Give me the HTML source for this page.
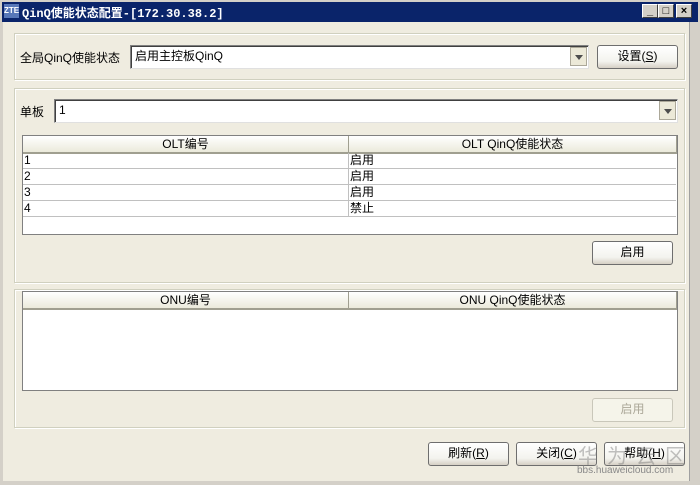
<!DOCTYPE html>
<html><head><meta charset="utf-8"><style>
*{box-sizing:border-box;margin:0;padding:0}
body{width:700px;height:485px;overflow:hidden;background:#d4d0c8;font-family:"Liberation Sans","Noto Sans CJK SC",sans-serif;font-size:12px;color:#000;position:relative}
.a{position:absolute}
.win{left:3px;top:22px;width:686px;height:460px;background:#efece0}
.title{left:0;top:0;width:700px;height:22px;background:#0a246a;border:2px solid #d4d0c8;border-bottom:none}
.ttext{left:22px;top:4px;color:#fff;font-weight:bold;font-size:12px;font-family:"Liberation Mono","Noto Sans CJK SC",monospace}
.tb{top:4px;width:16px;height:14px;background:#d4d0c8;border:1px solid;border-color:#fff #404040 #404040 #fff;font-size:11px;font-weight:bold;text-align:center;line-height:12px}
.grp{border:1px solid #d0d0bf;box-shadow:inset 1px 1px 0 #fff,1px 1px 0 #fff}
.combo{background:#fff;border:1px solid;border-color:#808080 #e0e0e0 #e0e0e0 #808080;box-shadow:inset 1px 1px 0 #404040;padding-left:4px;line-height:21px}
.dd{position:absolute;right:1px;top:1px;width:17px;height:19px;background:#ece9d8;border:1px solid #aca899}
.dd:after{content:"";position:absolute;left:4px;top:7px;border:4px solid transparent;border-top:5px solid #4d4d4d;border-bottom:none}
.btn{border:1px solid #6e6e6e;border-radius:3px;background:linear-gradient(#fff,#f3f3ee 70%,#d6d0c5);text-align:center;line-height:21px}
.tbl{background:#fff;border:1px solid #808080}
.hd{top:0;height:18px;background:linear-gradient(#fff,#ebeadb);border-bottom:2px solid #a09f90;text-align:center;line-height:17px;border-right:1px solid #a09f90}
.row{height:16px;border-bottom:1px solid #c0c0c0;line-height:15px;position:absolute;left:0;width:653px}
.row span{position:absolute;left:1px}
.row span+span{left:325px;border-left:1px solid #c0c0c0;padding-left:1px;height:15px}
</style></head><body>
<div class="a title"></div>
<div class="a" style="left:4px;top:4px;width:15px;height:14px;background:#5878b8;color:#fff;font-size:8px;font-weight:bold;line-height:14px;text-align:center">ZTE</div>
<div class="a ttext">QinQ使能状态配置-[172.30.38.2]</div>
<div class="a tb" style="left:642px">_</div>
<div class="a tb" style="left:658px">□</div>
<div class="a tb" style="left:676px">×</div>
<div class="a win"></div>
<div class="a" style="left:689px;top:22px;width:11px;height:463px;background:#d4d0c8;border-left:1px solid #a0a0a0"></div>
<div class="a" style="left:0;top:481px;width:700px;height:4px;background:#d4d0c8"></div>

<div class="a grp" style="left:14px;top:33px;width:671px;height:47px"></div>
<div class="a" style="left:20px;top:49px">全局QinQ使能状态</div>
<div class="a combo" style="left:130px;top:45px;width:459px;height:24px">启用主控板QinQ<div class="dd"></div></div>
<div class="a btn" style="left:597px;top:45px;width:81px;height:24px">设置(<u>S</u>)</div>

<div class="a grp" style="left:14px;top:88px;width:671px;height:195px"></div>
<div class="a" style="left:20px;top:103px">单板</div>
<div class="a combo" style="left:54px;top:99px;width:624px;height:24px">1<div class="dd"></div></div>
<div class="a tbl" style="left:22px;top:135px;width:656px;height:100px">
 <div class="a hd" style="left:0;width:326px">OLT编号</div>
 <div class="a hd" style="left:326px;width:328px">OLT QinQ使能状态</div>
 <div class="row" style="top:17px"><span>1</span><span>启用</span></div>
 <div class="row" style="top:33px"><span>2</span><span>启用</span></div>
 <div class="row" style="top:49px"><span>3</span><span>启用</span></div>
 <div class="row" style="top:65px"><span>4</span><span>禁止</span></div>
</div>
<div class="a btn" style="left:592px;top:241px;width:81px;height:24px">启用</div>

<div class="a grp" style="left:14px;top:289px;width:671px;height:139px"></div>
<div class="a tbl" style="left:22px;top:291px;width:656px;height:100px">
 <div class="a hd" style="left:0;width:326px">ONU编号</div>
 <div class="a hd" style="left:326px;width:328px">ONU QinQ使能状态</div>
</div>
<div class="a btn" style="left:592px;top:398px;width:81px;height:24px;color:#aca899;border-color:#c9c7ba;background:#f5f4ea">启用</div>

<div class="a btn" style="left:428px;top:442px;width:81px;height:24px">刷新(<u>R</u>)</div>
<div class="a btn" style="left:516px;top:442px;width:81px;height:24px">关闭(<u>C</u>)</div>
<div class="a btn" style="left:604px;top:442px;width:81px;height:24px">帮助(<u>H</u>)</div>
<div class="a" style="left:578px;top:440px;font-size:20px;color:rgba(120,120,120,0.45);letter-spacing:9px">华为云区</div>
<div class="a" style="left:577px;top:465px;font-size:10px;color:#888">bbs.huaweicloud.com</div>
</body></html>
